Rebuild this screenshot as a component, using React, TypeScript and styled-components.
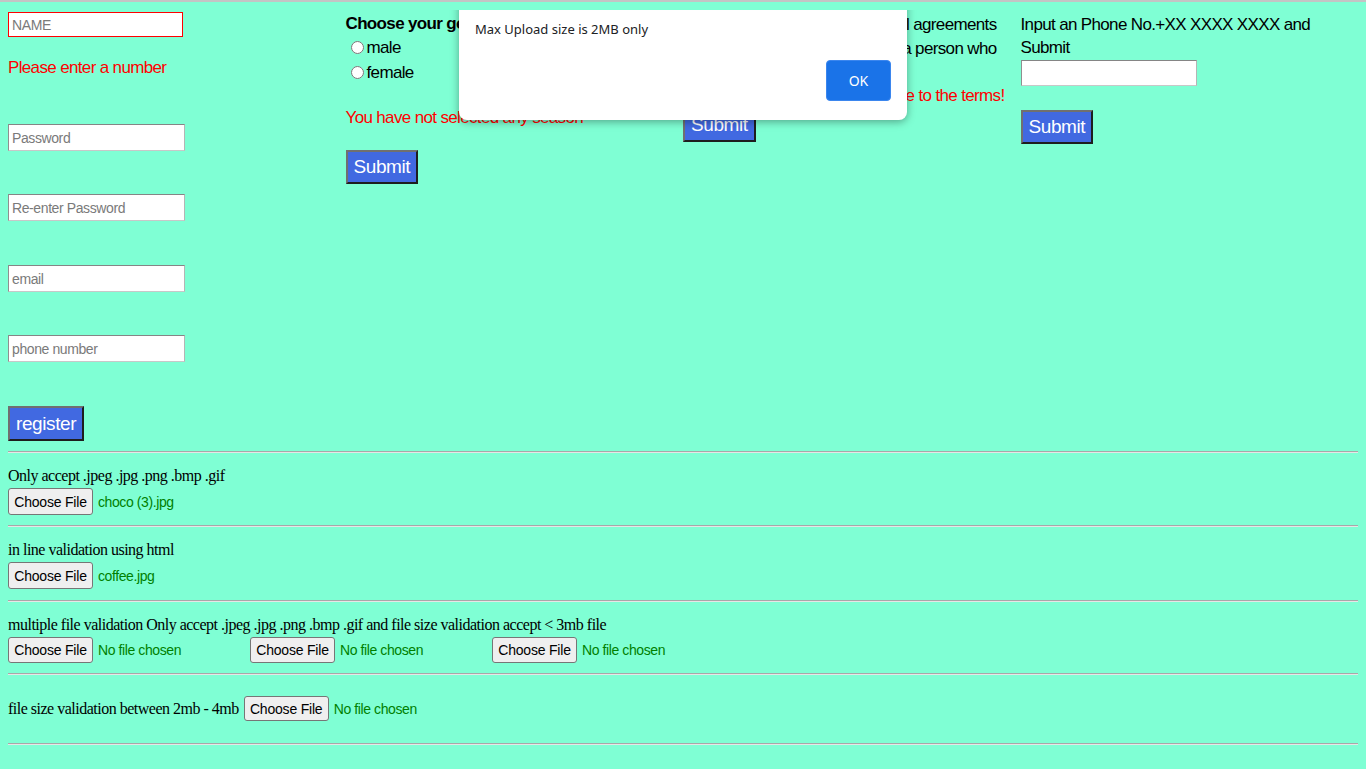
import React from "react"
import styled, { createGlobalStyle } from "styled-components"

const sans = `"Liberation Sans", Arial, sans-serif`
const serif = `"Liberation Serif", "Times New Roman", serif`
const ui = `"Noto Sans", "Open Sans", sans-serif`

const GlobalStyle = createGlobalStyle`
  html {
    border-top: 2px solid #c4c4c4;
    background: #7fffd4;
  }
  body {
    margin: 8px;
    background: #7fffd4;
    font-family: ${serif};
    font-size: 16px;
    color: #000;
  }
`

const Page = styled.div`
  position: relative;
  display: flex;
  flex-direction: column;
`

const TopForms = styled.div`
  display: grid;
  grid-template-columns: repeat(4, 1fr);
  font-family: ${sans};
  font-size: 17px;
  letter-spacing: -0.65px;
`

const Column = styled.div`
  display: flex;
  flex-direction: column;
  align-items: flex-start;
  padding-right: ${props => props.$padRight || 0}px;
`

const TextInput = styled.input`
  box-sizing: border-box;
  width: ${props => props.$w || 177}px;
  height: ${props => props.$h || 27}px;
  margin: ${props => props.$top || 0}px 0 0;
  padding: 0 3px;
  background: #fff;
  border: 1px solid;
  border-color: ${props => props.$invalid ? "#ff0000" : "#858585 #b5b5b5 #c8c8c8 #8f8f8f"};
  font-family: ${sans};
  font-size: 14px;
  letter-spacing: -0.4px;
  outline: none;
  &::placeholder {
    color: #7a7a7a;
  }
`

const ErrorText = styled.div`
  color: #ff0000;
  line-height: 22px;
  margin-top: ${props => props.$top || 0}px;
  margin-right: ${props => props.$right || 0}px;
  white-space: nowrap;
  align-self: ${props => props.$end ? "flex-end" : "flex-start"};
`

const BlueButton = styled.button`
  box-sizing: border-box;
  height: ${props => props.$h || 34}px;
  margin-top: ${props => props.$top || 0}px;
  padding: 0 6px;
  background: #4169e1;
  color: #fff;
  font-family: ${sans};
  font-size: 19px;
  letter-spacing: -0.4px;
  border: 2px solid;
  border-color: #707070 #1e1e1e #1e1e1e #707070;
`

const Heading = styled.div`
  font-weight: bold;
  line-height: 22px;
  margin-top: 3px;
  white-space: nowrap;
`

const RadioRow = styled.label`
  display: flex;
  align-items: center;
  height: 25px;
  input {
    margin: 0 3px 0 5px;
    width: 13px;
    height: 13px;
  }
`

const TermsText = styled.div`
  align-self: flex-end;
  text-align: right;
  line-height: 24px;
  margin-top: 3px;
  white-space: nowrap;
`

const PhoneLabel = styled.div`
  max-width: 320px;
  line-height: 23px;
  margin-top: 2.5px;
`

const Rule = styled.hr`
  width: 100%;
  height: 0;
  margin: ${props => props.$top || 0}px 0 0;
  border: none;
  border-top: 1px solid #a8a8a8;
  border-bottom: 1px solid #e6e6e6;
`

const Section = styled.section`
  display: flex;
  flex-direction: ${props => props.$row ? "row" : "column"};
  align-items: ${props => props.$row ? "center" : "flex-start"};
  padding: ${props => props.$pad || "13px 0 10px"};
`

const Label = styled.div`
  line-height: 20px;
  letter-spacing: -0.5px;
  white-space: nowrap;
`

const FileRow = styled.div`
  display: flex;
  align-items: center;
  margin-top: 2px;
`

const FilePick = styled.div`
  display: flex;
  align-items: center;
  width: ${props => props.$w ? `${props.$w}px` : "auto"};
  margin-left: ${props => props.$left || 0}px;
`

const ChooseButton = styled.button`
  box-sizing: border-box;
  width: 85px;
  height: ${props => props.$h || 27}px;
  padding: 0;
  background: #efefef;
  border: 1px solid #767676;
  border-radius: 3px;
  font-family: ${sans};
  font-size: 14px;
  letter-spacing: -0.2px;
  white-space: nowrap;
  color: #000;
`

const FileName = styled.span`
  margin-left: 5px;
  font-family: ${sans};
  font-size: 14px;
  letter-spacing: -0.4px;
  color: #008000;
  white-space: nowrap;
`

const Dialog = styled.div`
  position: absolute;
  left: 451px;
  top: -34px;
  box-sizing: border-box;
  width: 448px;
  padding: 0 16px 19px;
  background: #fff;
  border-radius: 8px;
  box-shadow: 0 2px 8px rgba(0, 0, 0, 0.35);
  font-family: ${ui};
  display: flex;
  flex-direction: column;
`

const DialogTitle = styled.div`
  font-size: 14px;
  line-height: 20px;
  padding-left: 12px;
  margin-top: 8px;
`

const DialogMessage = styled.div`
  font-size: 13px;
  line-height: 20px;
  margin-top: 15px;
  color: #202124;
`

const DialogActions = styled.div`
  display: flex;
  justify-content: flex-end;
  margin-top: 21px;
`

const OkButton = styled.button`
  width: 65px;
  height: 41px;
  background: #1a73e8;
  color: #fff;
  border: 1px solid #3b86ee;
  border-radius: 4px;
  font-family: ${ui};
  font-size: 14px;
`

const FileInput = ({ name, w, left, h }: { name?: string; w?: number; left?: number; h?: number }) => (
  <FilePick $w={w} $left={left}>
    <ChooseButton type="button" $h={h}>Choose File</ChooseButton>
    <FileName>{name || "No file chosen"}</FileName>
  </FilePick>
)

export default function App() {
  return (
    <Page>
      <GlobalStyle />
      <TopForms>
        <Column>
          <TextInput $invalid $w={175} $h={25} $top={2} placeholder="NAME" />
          <ErrorText $top={20}>Please enter a number</ErrorText>
          <TextInput $top={45} type="password" placeholder="Password" />
          <TextInput $top={43} type="password" placeholder="Re-enter Password" />
          <TextInput $top={44} placeholder="email" />
          <TextInput $top={43} placeholder="phone number" />
          <BlueButton $top={44} $h={35}>register</BlueButton>
        </Column>

        <Column>
          <Heading>Choose your gender</Heading>
          <RadioRow><input type="radio" name="gender" />male</RadioRow>
          <RadioRow><input type="radio" name="gender" />female</RadioRow>
          <ErrorText $top={22}>You have not selected any season</ErrorText>
          <BlueButton $top={21}>Submit</BlueButton>
        </Column>

        <Column $padRight={24}>
          <TermsText>
            I accept the terms and all agreements
            <br />
            made and signed by a person who
          </TermsText>
          <ErrorText $top={24} $right={-8} $end>You must agree to the terms!</ErrorText>
          <BlueButton $top={1}>Submit</BlueButton>
        </Column>

        <Column>
          <PhoneLabel>Input an Phone No.+XX XXXX XXXX and Submit</PhoneLabel>
          <TextInput $w={176} $h={26} $top={1.5} />
          <BlueButton $top={24}>Submit</BlueButton>
        </Column>
      </TopForms>

      <Rule $top={10} />
      <Section>
        <Label>Only accept .jpeg .jpg .png .bmp .gif</Label>
        <FileRow><FileInput name="choco (3).jpg" /></FileRow>
      </Section>

      <Rule />
      <Section $pad="13px 0 11px">
        <Label>in line validation using html</Label>
        <FileRow><FileInput name="coffee.jpg" /></FileRow>
      </Section>

      <Rule />
      <Section $pad="13px 0 10px">
        <Label>multiple file validation Only accept .jpeg .jpg .png .bmp .gif and file size validation accept &lt; 3mb file</Label>
        <FileRow>
          <FileInput w={242} h={26} />
          <FileInput w={242} h={26} />
          <FileInput h={26} />
        </FileRow>
      </Section>

      <Rule />
      <Section $row $pad="21px 0 22px">
        <Label>file size validation between 2mb - 4mb</Label>
        <FileInput left={5} h={25} />
      </Section>
      <Rule />

      <Dialog>
        <DialogTitle>This page says</DialogTitle>
        <DialogMessage>Max Upload size is 2MB only</DialogMessage>
        <DialogActions>
          <OkButton type="button">OK</OkButton>
        </DialogActions>
      </Dialog>
    </Page>
  )
}
